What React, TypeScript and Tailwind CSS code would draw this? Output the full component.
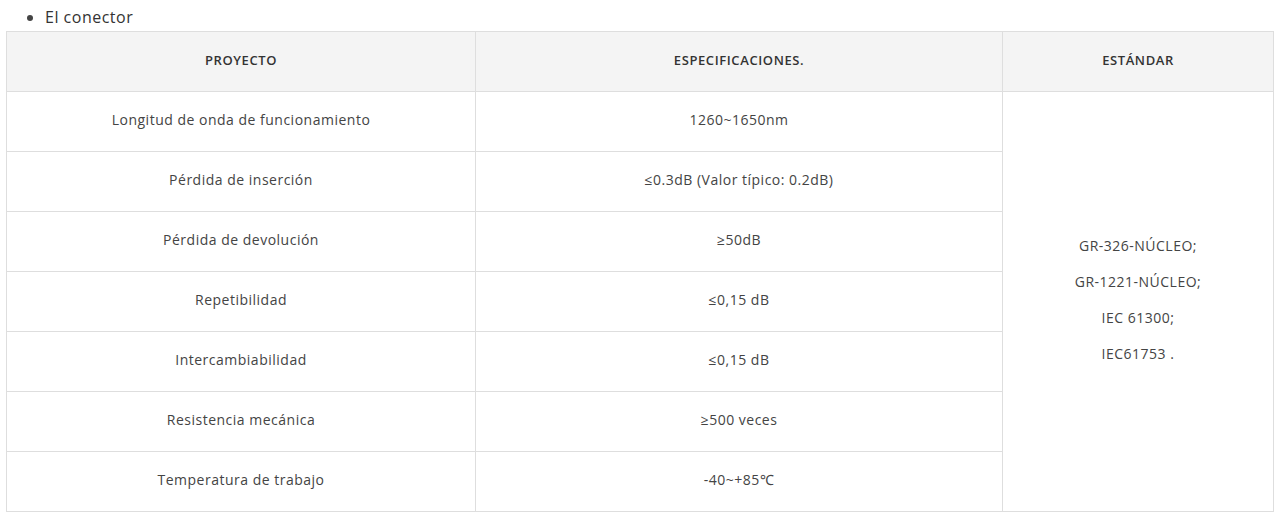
const rows: [string, string][] = [
  ["Longitud de onda de funcionamiento", "1260~1650nm"],
  ["Pérdida de inserción", "≤0.3dB (Valor típico: 0.2dB)"],
  ["Pérdida de devolución", "≥50dB"],
  ["Repetibilidad", "≤0,15 dB"],
  ["Intercambiabilidad", "≤0,15 dB"],
  ["Resistencia mecánica", "≥500 veces"],
  ["Temperatura de trabajo", "-40~+85℃"],
];

const standards = ["GR-326-NÚCLEO;", "GR-1221-NÚCLEO;", "IEC 61300;", "IEC61753 ."];

export default function App() {
  return (
    <div className="bg-white w-[1282px] h-[519px] overflow-hidden font-['Open_Sans',sans-serif] text-[#333]">
      <ul className="list-disc pl-[45px] pt-[5px] marker:text-[#444]">
        <li className="text-[16px] leading-6 tracking-[0.5px] text-[#333]">El conector</li>
      </ul>
      <table className="ml-[6px] mt-[2px] w-[1267px] border-collapse table-fixed text-center text-[14px] tracking-[0.5px] text-[#444]">
        <colgroup>
          <col className="w-[469px]" />
          <col className="w-[527px]" />
          <col className="w-[271px]" />
        </colgroup>
        <thead>
          <tr className="bg-[#f4f4f4] h-[60px]">
            <th className="border border-[#dedede] pb-[2px] text-[13px] font-semibold tracking-[0.6px] text-[#333]">PROYECTO</th>
            <th className="border border-[#dedede] pb-[2px] text-[13px] font-semibold tracking-[0.6px] text-[#333]">ESPECIFICACIONES.</th>
            <th className="border border-[#dedede] pb-[2px] text-[13px] font-semibold tracking-[0.6px] text-[#333]">ESTÁNDAR</th>
          </tr>
        </thead>
        <tbody>
          {rows.map(([name, spec], i) => (
            <tr key={name} className="h-[60px]">
              <td className="border border-[#dedede] pb-[4px]">{name}</td>
              <td className="border border-[#dedede] pb-[4px]">{spec}</td>
              {i === 0 && (
                <td rowSpan={7} className="border border-[#dedede] pb-[4px] align-middle">
                  <div className="flex flex-col items-center gap-[15px] leading-[21px]">
                    {standards.map((s) => (
                      <p key={s}>{s}</p>
                    ))}
                  </div>
                </td>
              )}
            </tr>
          ))}
        </tbody>
      </table>
    </div>
  );
}
